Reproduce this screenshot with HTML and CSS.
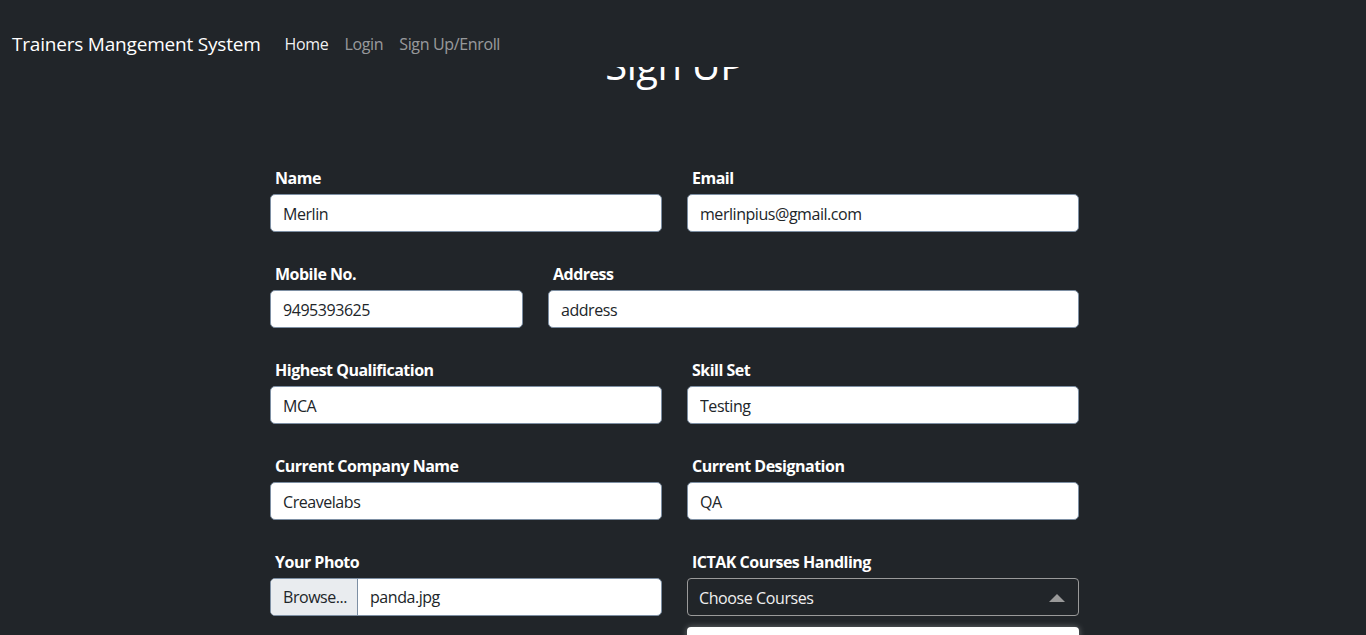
FILE: index.html
```html
<!DOCTYPE html>
<html lang="en">
<head>
<meta charset="utf-8">
<title>Trainers Mangement System</title>
<link rel="stylesheet" href="styles.css">
</head>
<body>
<header class="navbar">
  <a class="brand" href="#">Trainers Mangement System</a>
  <ul class="nav">
    <li><a class="nav-link active" href="#">Home</a></li>
    <li><a class="nav-link" href="#">Login</a></li>
    <li><a class="nav-link" href="#">Sign Up/Enroll</a></li>
  </ul>
</header>
<main class="page">
  <h1 class="title">Sign UP</h1>
  <form class="signup">
    <div class="row half">
      <div class="field"><label>Name</label><input class="control" value="Merlin"></div>
      <div class="field"><label>Email</label><input class="control" value="merlinpius@gmail.com"></div>
    </div>
    <div class="row third">
      <div class="field"><label>Mobile No.</label><input class="control" value="9495393625"></div>
      <div class="field"><label>Address</label><input class="control" value="address"></div>
    </div>
    <div class="row half">
      <div class="field"><label>Highest Qualification</label><input class="control" value="MCA"></div>
      <div class="field"><label>Skill Set</label><input class="control" value="Testing"></div>
    </div>
    <div class="row half">
      <div class="field"><label>Current Company Name</label><input class="control" value="Creavelabs"></div>
      <div class="field"><label>Current Designation</label><input class="control" value="QA"></div>
    </div>
    <div class="row half">
      <div class="field">
        <label>Your Photo</label>
        <div class="file">
          <span class="file-btn">Browse...</span>
          <span class="file-name">panda.jpg</span>
        </div>
      </div>
      <div class="field">
        <label>ICTAK Courses Handling</label>
        <div class="multiselect">
          <div class="ms-box">
            <span>Choose Courses</span>
            <span class="caret"></span>
          </div>
          <div class="ms-list"></div>
        </div>
      </div>
    </div>
  </form>
</main>
</body>
</html>
```
FILE: styles.css
```css
* { box-sizing: border-box; }
html, body { margin: 0; padding: 0; }
body {
  background: #212529;
  color: #fff;
  font-family: "Open Sans", "Noto Sans", sans-serif;
  font-size: 16px;
  line-height: 24px;
  overflow: hidden;
  height: 635px;
}
.navbar {
  position: fixed;
  top: 0; left: 0; right: 0;
  height: 67px;
  background: #212529;
  z-index: 10;
  display: flex;
  align-items: center;
  padding: 29px 12px 8px;
}
.brand {
  color: #fff;
  text-decoration: none;
  font-size: 19px;
  line-height: 30px;
  margin-right: 16px;
  letter-spacing: -0.2px;
}
.nav {
  display: flex;
  list-style: none;
  margin: 0; padding: 0;
}
.nav-link {
  display: block;
  padding: 0 8px;
  color: rgba(255,255,255,.55);
  text-decoration: none;
  letter-spacing: -0.35px;
}
.nav-link.active { color: rgba(255,255,255,.95); }
.page {
  padding-right: 17px;
}
.title {
  margin: 0;
  padding-top: 41px;
  text-align: center;
  font-weight: 400;
  font-size: 40px;
  line-height: 48px;
  letter-spacing: -0.5px;
}
.signup {
  width: 809px;
  margin: 77px auto 0;
  display: flex;
  flex-direction: column;
  gap: 30px;
}
.row { display: grid; column-gap: 25px; }
.row.half { grid-template-columns: 1fr 1fr; }
.row.third { grid-template-columns: 253px 1fr; }
.field { display: flex; flex-direction: column; }
label {
  font-weight: 700;
  padding-left: 5px;
  margin-bottom: 4px;
  line-height: 24px;
  letter-spacing: -0.5px;
}
.control {
  height: 38px;
  width: 100%;
  border: 1px solid #7d8fa3;
  border-radius: 5px;
  background: #fff;
  color: #212529;
  font: inherit;
  letter-spacing: -0.45px;
  padding: 7px 12px 5px;
  outline: none;
}
.file {
  display: flex;
  height: 38px;
  border: 1px solid #7d8fa3;
  border-radius: 5px;
  background: #fff;
  overflow: hidden;
  color: #212529;
  letter-spacing: -0.45px;
}
.file-btn {
  background: #e9ecef;
  padding: 6px 12px;
  width: 87px;
  border-right: 1px solid #7d8fa3;
  white-space: nowrap;
}
.file-name { padding: 6px 12px; }
.multiselect { position: relative; }
.ms-box {
  height: 38px;
  border: 1px solid #9a9a9a;
  border-radius: 4px;
  display: flex;
  align-items: center;
  justify-content: space-between;
  padding: 2px 12px 0 11px;
  color: #f0f0f0;
  letter-spacing: -0.4px;
}
.caret {
  width: 0; height: 0;
  border-left: 8px solid transparent;
  border-right: 8px solid transparent;
  border-bottom: 8px solid #999;
  margin-right: 1px;
}
.ms-list {
  margin-top: 11px;
  height: 60px;
  background: #fff;
  border-radius: 4px;
  box-shadow: 0 0 6px rgba(255,255,255,.35);
}
```
